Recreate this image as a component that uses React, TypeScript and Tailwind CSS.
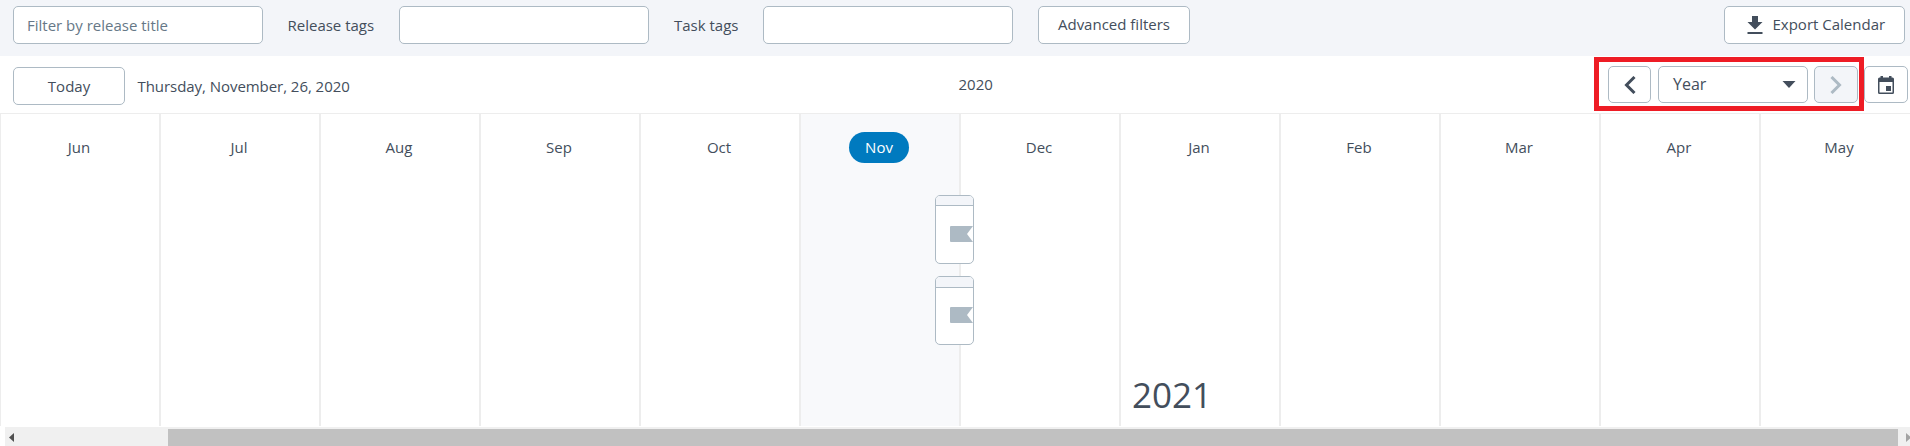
import React from "react";

const months = ["Jun", "Jul", "Aug", "Sep", "Oct", "Nov", "Dec", "Jan", "Feb", "Mar", "Apr", "May"];

const box = "shrink-0 rounded-[5px] border border-[#adbac4] bg-white";

function ReleaseCard({ className, headerClass, bodyClass }: { className: string; headerClass: string; bodyClass: string }) {
  return (
    <div className={`absolute left-[134px] z-10 h-[69px] w-[39px] overflow-hidden rounded-[5px] border border-[#adbac4] bg-white ${className}`}>
      <div className={`border-b border-[#adbac4] bg-[#f3f5f9] ${headerClass}`} />
      <svg className={`ml-[14px] block ${bodyClass}`} width="23" height="16" viewBox="0 0 23 16">
        <path d="M1 0H23L17 8L23 16H1Q0 16 0 15V1Q0 0 1 0Z" fill="#adbac4" />
      </svg>
    </div>
  );
}

export default function App() {
  return (
    <div className="flex h-[446px] w-[1910px] flex-col overflow-hidden bg-white font-['Open_Sans',sans-serif] text-[15px] leading-5 text-[#434e5c]">
      <header className="flex h-14 shrink-0 items-start bg-[#f3f5f9] pt-1.5 pr-[5px] pl-[13px]">
        <input className={`${box} h-[38px] w-[250px] px-[13px] pb-px outline-none placeholder:text-[#667887]`} placeholder="Filter by release title" />
        <label className="w-[136px] shrink-0 pt-[9px] pl-[24.5px] whitespace-nowrap">Release tags</label>
        <input className={`${box} h-[38px] w-[250px] px-3 outline-none`} />
        <label className="w-[114px] shrink-0 pt-[9px] pl-[25px] whitespace-nowrap">Task tags</label>
        <input className={`${box} h-[38px] w-[250px] px-3 outline-none`} />
        <button className={`${box} ml-[25px] h-[38px] w-[152px] pb-0.5 whitespace-nowrap`}>Advanced filters</button>
        <button className={`${box} ml-auto flex h-[38px] w-[181px] items-center pl-[22px] whitespace-nowrap`}>
          <svg className="mr-[9.5px] shrink-0" width="16" height="18" viewBox="0 0 16 18" fill="#434e5c">
            <path d="M5 0H11V6H15.5L8 13.5L.5 6H5ZM.5 16H15.5V18H.5Z" />
          </svg>
          <span className="pb-0.5">Export Calendar</span>
        </button>
      </header>

      <section className="flex h-[57px] shrink-0 items-start pl-[13px]">
        <button className={`${box} mt-[11px] h-[38px] w-[112px] pb-px`}>Today</button>
        <span className="mt-5 ml-[12.5px] w-[821px] tracking-[-0.05px]">Thursday, November, 26, 2020</span>
        <span className="mt-[18px]">2020</span>
        <div className="mt-px ml-auto flex h-[54px] w-[270px] shrink-0 border-[5px] border-[#ee1c25] pt-1 pl-[9px]">
          <button className={`${box} flex h-[37px] w-[43px] items-center justify-center`}>
            <svg width="12" height="18" viewBox="0 0 12 18" fill="none" stroke="#434e5c" strokeWidth="3">
              <path d="M10.5 1L2.5 9L10.5 17" />
            </svg>
          </button>
          <button className={`${box} ml-[7px] flex h-[37px] w-[150px] items-center justify-between pr-[11px] pl-[14px] text-[16px]`}>
            <span className="pb-0.5">Year</span>
            <svg width="14" height="7" viewBox="0 0 14 7" fill="#434e5c">
              <path d="M.5 0H13.5L7 7Z" />
            </svg>
          </button>
          <button className="ml-1.5 flex h-[37px] w-[44px] shrink-0 items-center justify-center rounded-[5px] border border-[#adbac4] bg-[#f3f5f9]">
            <svg width="12" height="18" viewBox="0 0 12 18" fill="none" stroke="#adbac4" strokeWidth="3">
              <path d="M1.5 1L9.5 9L1.5 17" />
            </svg>
          </button>
        </div>
        <button className={`${box} mt-[10px] mr-[2px] flex h-[37px] w-[44px] items-center justify-center`}>
          <svg width="16" height="18" viewBox="0 0 16 18">
            <path fillRule="evenodd" d="M1.5 1.5H2.5V0H5V1.5H11V0H13.5V1.5H14.5Q16 1.5 16 3V16.5Q16 18 14.5 18H1.5Q0 18 0 16.5V3Q0 1.5 1.5 1.5ZM1.5 6V16.4H14.5V6ZM8 10H13V15H8Z" fill="#434e5c" />
          </svg>
        </button>
      </section>

      <main className="flex h-[313px] w-[1920px] shrink-0 border-t border-[#ededed]">
        {months.map((month) => (
          <div key={month} className={`relative flex w-40 shrink-0 flex-col items-center border-x border-[#ededed] pt-[18px] pr-0.5 ${month === "Nov" ? "bg-[#f8f9fb]" : ""}`}>
            <div className={`flex h-[31px] w-[60px] items-center justify-center rounded-full pb-0.5 ${month === "Nov" ? "bg-[#007abf] font-medium text-white" : ""}`}>{month}</div>
            {month === "Nov" && (
              <>
                <ReleaseCard className="top-[81px]" headerClass="h-[10px]" bodyClass="mt-5" />
                <ReleaseCard className="top-[162px]" headerClass="h-[11px]" bodyClass="mt-[19px]" />
              </>
            )}
            {month === "Jan" && <div className="mt-auto mb-[7px] w-full pl-[11px] text-[35px] leading-[48px]">2021</div>}
          </div>
        ))}
      </main>

      <footer className="mt-px ml-[5px] flex h-[19px] shrink-0 items-start bg-[#f0f0f0]">
        <svg className="mt-[6px] ml-1 shrink-0" width="5" height="9" viewBox="0 0 5 9" fill="#505050">
          <path d="M5 0V9L0 4.5Z" />
        </svg>
        <div className="mt-[2px] ml-[154px] h-[17px] w-[1730px] shrink-0 bg-[#c1c1c1]" />
        <svg className="mt-[6px] ml-2 shrink-0" width="5" height="9" viewBox="0 0 5 9" fill="#a3a3a3">
          <path d="M0 0V9L5 4.5Z" />
        </svg>
      </footer>
    </div>
  );
}
